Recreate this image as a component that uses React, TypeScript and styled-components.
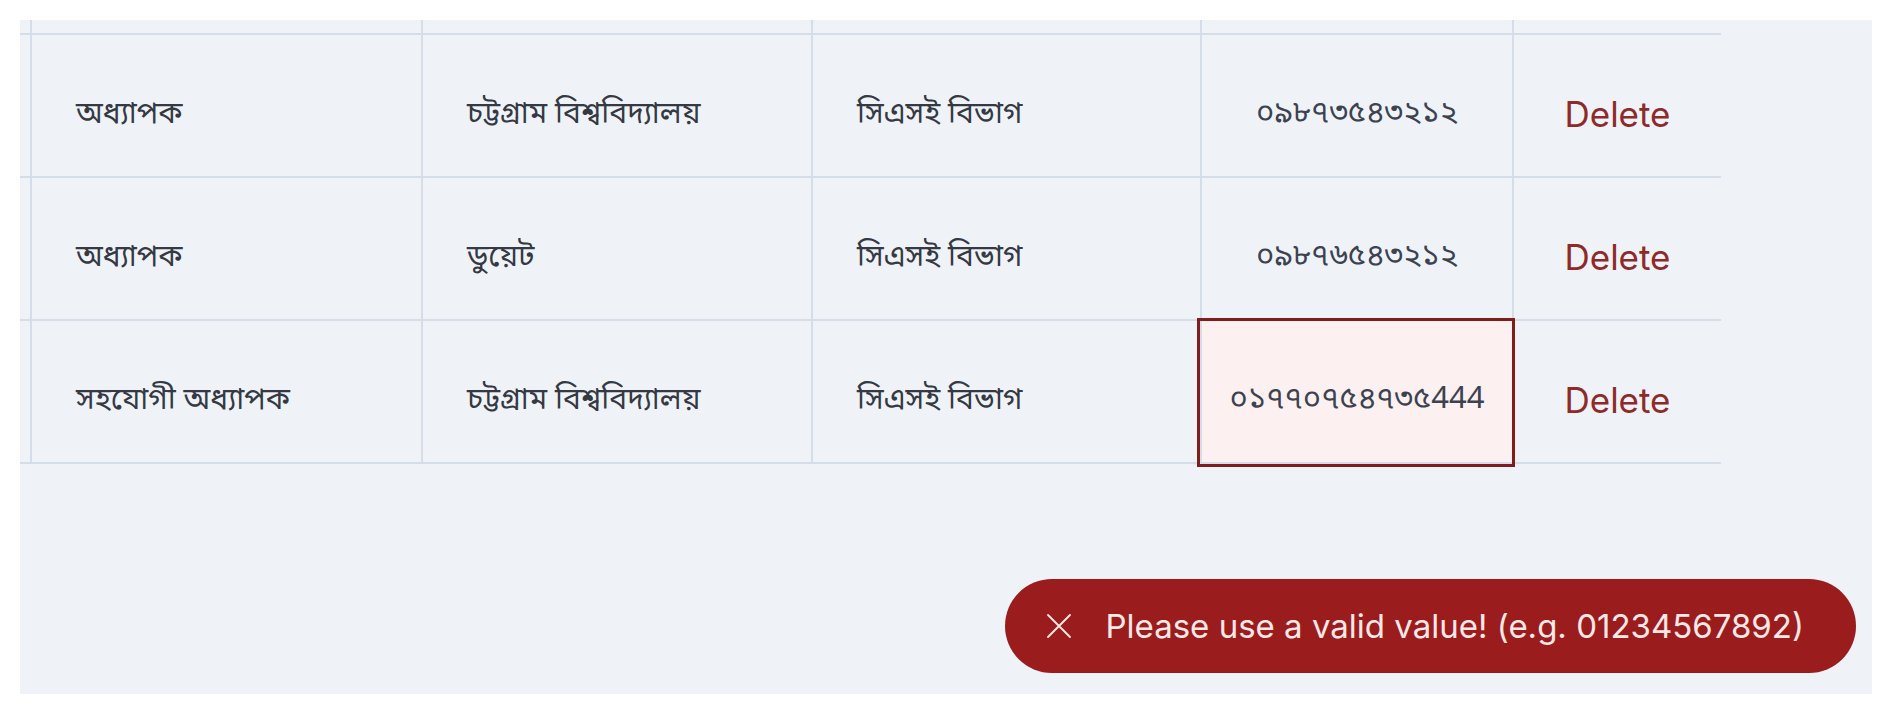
import React from "react";
import styled, { createGlobalStyle } from "styled-components";

const GlobalStyle = createGlobalStyle`
  html, body {
    margin: 0;
    padding: 0;
    background: #ffffff;
  }
  body {
    font-family: Inter, "Noto Sans", sans-serif;
  }
  * { box-sizing: border-box; }
`;

const Page = styled.div`
  padding: 20px;
  width: 1892px;
  height: 714px;
`;

const Panel = styled.div`
  width: 1852px;
  height: 674px;
  background: #eff3f8;
  overflow: hidden;
`;

const Table = styled.table`
  border-collapse: separate;
  border-spacing: 0;
  table-layout: fixed;
  width: 1701px;
`;

const Row = styled.tr<{ $h?: number }>`
  height: ${(p) => p.$h ?? 143}px;
`;

const Cell = styled.td<{ $edge?: boolean }>`
  border-left: ${(p) => (p.$edge ? "none" : "2px solid #d5dde8")};
  border-bottom: 2px solid #d5dde8;
  padding: 18px 0 0 44px;
  text-align: left;
  vertical-align: middle;
  font-family: "Noto Sans Bengali", "Noto Serif Bengali", "Lohit Bengali", "FreeSans", "Noto Sans", sans-serif;
  font-size: 30px;
  color: #343943;
  white-space: nowrap;
  overflow: hidden;
`;

const StubCell = styled(Cell)`
  padding: 0;
`;

const NumCell = styled(Cell)<{ $invalid?: boolean }>`
  padding: 18px 0 0 0;
  text-align: center;
  font-size: 31px;
  color: #3b4250;
  overflow: visible;
  background: ${(p) => (p.$invalid ? "#fdf0f0" : "transparent")};
  outline: ${(p) => (p.$invalid ? "3px solid #7f1d1d" : "none")};
  outline-offset: 0;
`;

const ActionCell = styled(Cell)`
  padding: 20px 0 0 0;
  text-align: center;
`;

const DeleteButton = styled.button`
  border: none;
  background: none;
  padding: 0;
  cursor: pointer;
  font-family: Inter, "Noto Sans", sans-serif;
  font-size: 35px;
  color: #8f2a2a;
`;

const Toast = styled.div`
  position: fixed;
  right: 36px;
  bottom: 41px;
  height: 94px;
  padding: 0 52px 0 41px;
  border-radius: 47px;
  background: #9b1c1c;
  display: flex;
  align-items: center;
  gap: 34px;
  color: #fde8e8;
  font-family: Inter, "Noto Sans", sans-serif;
  font-size: 33px;
`;

const CloseIcon = styled.svg`
  width: 26px;
  height: 26px;
  flex: none;
`;

type RowData = { title: string; org: string; dept: string; phone: string; invalid?: boolean };

const rows: RowData[] = [
  { title: "অধ্যাপক", org: "চট্টগ্রাম বিশ্ববিদ্যালয়", dept: "সিএসই বিভাগ", phone: "০৯৮৭৩৫৪৩২১২" },
  { title: "অধ্যাপক", org: "ডুয়েট", dept: "সিএসই বিভাগ", phone: "০৯৮৭৬৫৪৩২১২" },
  { title: "সহযোগী অধ্যাপক", org: "চট্টগ্রাম বিশ্ববিদ্যালয়", dept: "সিএসই বিভাগ", phone: "০১৭৭০৭৫৪৭৩৫444", invalid: true },
];

export default function App() {
  return (
    <>
      <GlobalStyle />
      <Page>
        <Panel>
          <Table>
            <colgroup>
              <col style={{ width: 10 }} />
              <col style={{ width: 391 }} />
              <col style={{ width: 390 }} />
              <col style={{ width: 389 }} />
              <col style={{ width: 312 }} />
              <col style={{ width: 209 }} />
            </colgroup>
            <tbody>
              <Row $h={15}>
                <StubCell $edge />
                <StubCell />
                <StubCell />
                <StubCell />
                <StubCell />
                <StubCell />
              </Row>
              {rows.map((r, i) => (
                <Row key={i}>
                  <StubCell $edge />
                  <Cell>{r.title}</Cell>
                  <Cell>{r.org}</Cell>
                  <Cell>{r.dept}</Cell>
                  <NumCell $invalid={r.invalid}>{r.phone}</NumCell>
                  <ActionCell><DeleteButton>Delete</DeleteButton></ActionCell>
                </Row>
              ))}
            </tbody>
          </Table>
        </Panel>
      </Page>
      <Toast role="alert">
        <CloseIcon viewBox="0 0 26 26" fill="none" stroke="currentColor" strokeWidth="1.8" strokeLinecap="round">
          <path d="M2 2L24 24M24 2L2 24" />
        </CloseIcon>
        <span>Please use a valid value! (e.g. 01234567892)</span>
      </Toast>
    </>
  );
}
